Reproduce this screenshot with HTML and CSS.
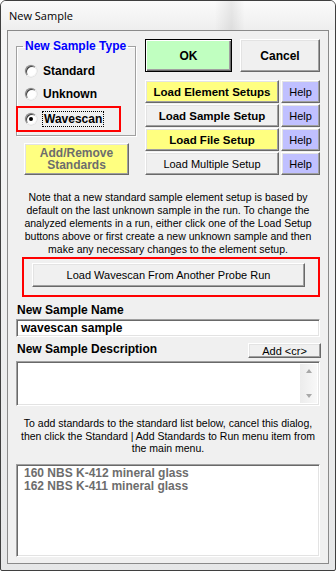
FILE: index.html
```html
<!DOCTYPE html>
<html lang="en">
<head>
    <meta charset="UTF-8">
    <title>New Sample</title>
    <link rel="stylesheet" href="styles.css">
</head>
<body>
    <div class="window">
        <div class="titlebar">New Sample</div>
        <div class="frame">
            <div class="client">
                <div class="top">
                    <div class="left-col">
                        <fieldset class="group">
                            <legend>New Sample Type</legend>
                            <div class="opt opt-first"><span class="radio"></span><span class="opt-text">Standard</span></div>
                            <div class="opt"><span class="radio"></span><span class="opt-text">Unknown</span></div>
                            <div class="opt opt-mark"><span class="radio on"></span><span class="focus">Wavescan</span></div>
                        </fieldset>
                        <button class="btn yellow muted add-std">Add/Remove<br>Standards</button>
                    </div>
                    <div class="right-col">
                        <div class="actions">
                            <button class="btn default ok">OK</button>
                            <button class="btn bold cancel">Cancel</button>
                        </div>
                        <div class="setups">
                            <button class="btn yellow bold">Load Element Setups</button>
                            <button class="btn help">Help</button>
                            <button class="btn bold">Load Sample Setup</button>
                            <button class="btn help">Help</button>
                            <button class="btn yellow bold">Load File Setup</button>
                            <button class="btn help">Help</button>
                            <button class="btn">Load Multiple Setup</button>
                            <button class="btn help">Help</button>
                        </div>
                    </div>
                </div>

                <p class="note">Note that a new standard sample element setup is based by<br>default on the last unknown sample in the run. To change the<br>analyzed elements in a run, either click one of the Load Setup<br>buttons above or first create a new unknown sample and then<br>make any necessary changes to the element setup.</p>

                <div class="mark-box">
                    <button class="btn wide">Load Wavescan From Another Probe Run</button>
                </div>

                <div class="field-label name-label">New Sample Name</div>
                <div class="textbox">wavescan sample</div>

                <div class="desc-row">
                    <span class="field-label">New Sample Description</span>
                    <button class="btn small">Add &lt;cr&gt;</button>
                </div>
                <div class="memo">
                    <div class="memo-text"></div>
                    <div class="scrollbar">
                        <span class="arrow-up"></span>
                        <span class="arrow-down"></span>
                    </div>
                </div>

                <p class="note note-2">To add standards to the standard list below, cancel this dialog,<br>then click the Standard | Add Standards to Run menu item from<br>the main menu.</p>

                <div class="listbox">
                    <div class="item">160 NBS K-412 mineral glass</div>
                    <div class="item">162 NBS K-411 mineral glass</div>
                </div>
            </div>
        </div>
    </div>
</body>
</html>
```

FILE: styles.css
```css
:root {
    --face: #f0f0f0;
    --shadow: #a0a0a0;
    --dark-shadow: #696969;
    --yellow: #ffff80;
    --green: #c0ffc0;
    --lilac: #c0c0ff;
    --mark: #f00;
}

* {
    box-sizing: border-box;
}

body {
    margin: 0;
    font-family: 'Liberation Sans', Arial, sans-serif;
    font-size: 11px;
    color: #000;
    background: #fff;
}

/* window chrome */
.window {
    width: 336px;
    height: 571px;
    border: 1px solid #3f3f3f;
    border-radius: 6px 6px 2px 2px;
    background: linear-gradient(180deg, #f7f7f7, #e6e7e8);
    overflow: hidden;
}

.titlebar {
    height: 29px;
    padding-left: 8px;
    line-height: 29px;
    font-family: 'Open Sans', 'Liberation Sans', sans-serif;
    font-size: 11px;
    background:
        linear-gradient(90deg, transparent 64%, rgba(0, 0, 0, 0.07) 69%, transparent 73%),
        linear-gradient(180deg, #fbfbfb, #eeeeee);
}

.frame {
    padding: 0 6px 6px;
}

.client {
    height: 534px;
    padding: 0 8px;
    border: 1px solid #8a8a8a;
    background: var(--face);
}

/* buttons */
.btn {
    display: flex;
    align-items: center;
    justify-content: center;
    padding: 0;
    margin: 0;
    font-family: inherit;
    font-size: 11px;
    color: #000;
    background: var(--face);
    border: 1px solid;
    border-color: #fff var(--dark-shadow) var(--dark-shadow) #fff;
    box-shadow: inset -1px -1px 0 var(--shadow), inset 1px 1px 0 #e3e3e3;
    text-align: center;
}

.bold {
    font-weight: 700;
    font-size: 11.5px;
}

.yellow {
    background: var(--yellow);
}

.help {
    background: var(--lilac);
}

.default {
    border: 1px solid #000;
    box-shadow: inset 1px 1px 0 #fff, inset -1px -1px 0 var(--dark-shadow), inset -2px -2px 0 var(--shadow);
}

/* top area */
.top {
    display: grid;
    grid-template-columns: 120px 175px;
    column-gap: 9px;
    padding-top: 8px;
}

.group {
    margin: 0;
    padding: 0 0 3px;
    min-width: 0;
    border: 1px solid var(--shadow);
    box-shadow: 1px 1px 0 #fff, inset 1px 1px 0 #fff;
}

.group legend {
    margin-left: 6px;
    padding: 0 2px;
    font-size: 12px;
    font-weight: 700;
    line-height: 14px;
    color: #0000ff;
}

.opt {
    display: flex;
    align-items: center;
    height: 20px;
    margin-top: 3px;
    padding-left: 8px;
    font-size: 12px;
    font-weight: 700;
}

.opt-first {
    margin-top: 8px;
}

.opt-text {
    margin-left: 6px;
}

.opt-mark {
    width: 105px;
    height: 26px;
    margin-top: 2px;
    margin-left: -1px;
    padding-left: 7px;
    border: 2px solid var(--mark);
}

.focus {
    margin-left: 5px;
    padding: 0 1px;
    line-height: 14px;
    border: 1px dotted #000;
}

.radio {
    position: relative;
    flex: none;
    width: 12px;
    height: 12px;
    border-radius: 50%;
    background: #fff;
    border: 1px solid;
    border-color: #808080 #f4f4f4 #f4f4f4 #808080;
    box-shadow: inset 1px 1px 0 #404040, 0 0 0 0.5px #d8d8d8;
}

.radio.on::after {
    content: "";
    position: absolute;
    left: 3px;
    top: 3px;
    width: 4px;
    height: 4px;
    border-radius: 50%;
    background: #000;
}

.add-std {
    width: 105px;
    height: 32px;
    margin: 7px 0 0 8px;
    font-size: 12px;
    font-weight: 700;
    line-height: 12.5px;
}

.muted {
    color: #6d6d6d;
}

.actions {
    display: flex;
    gap: 8px;
}

.ok {
    width: 87px;
    height: 33px;
    font-size: 12px;
    font-weight: 700;
    background: var(--green);
}

.cancel {
    width: 80px;
    height: 33px;
    font-size: 12px;
}

.setups {
    display: grid;
    grid-template-columns: 134px 39px;
    grid-auto-rows: 23px;
    column-gap: 2px;
    row-gap: 1px;
    margin-top: 8px;
}

/* notes */
.note {
    margin: 16px 0 0;
    font-size: 10.5px;
    line-height: 13px;
    text-align: center;
    white-space: nowrap;
}

.note-2 {
    margin-top: 11px;
    line-height: 12.5px;
}

.mark-box {
    height: 40px;
    margin: 1px 0 0 6px;
    padding: 4px 13px 8px 8px;
    border: 2px solid var(--mark);
}

.wide {
    width: 100%;
    height: 24px;
}

/* fields */
.field-label {
    font-size: 12px;
    font-weight: 700;
    line-height: 14px;
}

.name-label {
    margin-top: 6px;
    padding-left: 1px;
}

.textbox,
.memo,
.listbox {
    background: #fff;
    border: 1px solid;
    border-color: var(--shadow) #fff #fff var(--shadow);
    box-shadow: inset 1px 1px 0 var(--dark-shadow), inset -1px -1px 0 #e3e3e3;
}

.textbox {
    height: 18px;
    margin-top: 2px;
    padding-left: 4px;
    font-size: 12px;
    font-weight: 700;
    line-height: 16px;
}

.desc-row {
    display: flex;
    justify-content: space-between;
    align-items: flex-start;
    margin-top: 5px;
    padding-left: 1px;
}

.small {
    width: 73px;
    height: 15px;
    margin: 1px -1px 0 0;
}

.memo {
    display: flex;
    height: 45px;
    margin-top: 3px;
    padding: 2px;
}

.memo-text {
    flex: 1;
}

.scrollbar {
    display: flex;
    flex-direction: column;
    justify-content: space-between;
    align-items: center;
    width: 17px;
    padding: 5px 0;
    background: linear-gradient(90deg, #ececec, #f8f8f8);
}

.arrow-up,
.arrow-down {
    width: 0;
    height: 0;
    border-left: 3.5px solid transparent;
    border-right: 3.5px solid transparent;
}

.arrow-up {
    border-bottom: 4px solid #a8a8a8;
}

.arrow-down {
    border-top: 4px solid #a8a8a8;
}

.listbox {
    height: 93px;
    margin-top: 9px;
    padding: 2px 7px;
    font-size: 12px;
    font-weight: 700;
    line-height: 13px;
    color: #6d6d6d;
}
```
